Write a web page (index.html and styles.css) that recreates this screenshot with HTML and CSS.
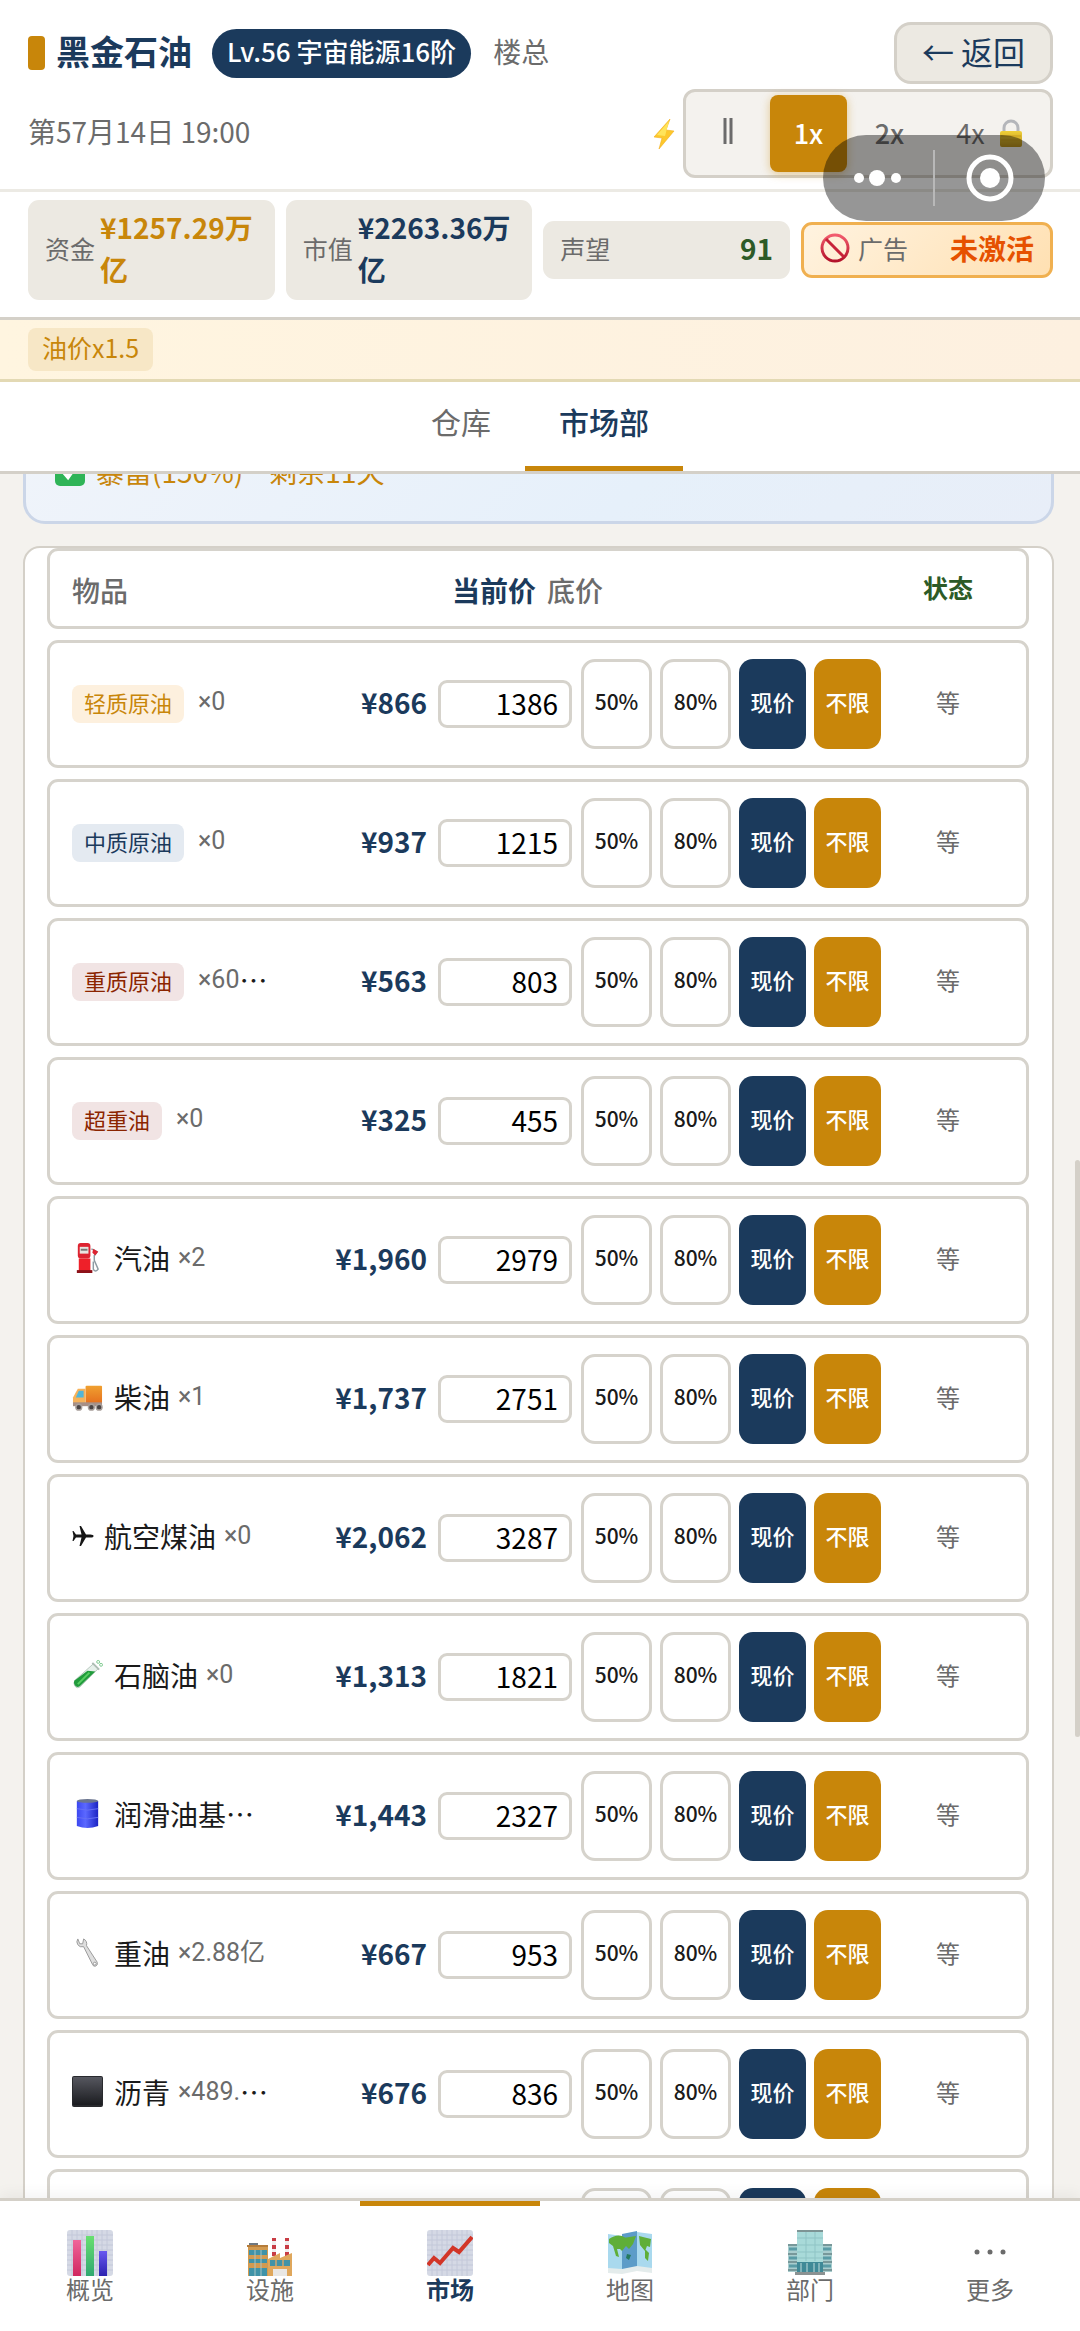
FILE: index.html
```html
<!DOCTYPE html>
<html lang="zh-CN">
<head>
<meta charset="utf-8">
<meta name="viewport" content="width=device-width, initial-scale=1">
<title>黑金石油</title>
<link rel="stylesheet" href="styles.css">
</head>
<body>
<svg class="defs" aria-hidden="true">
  <defs>
    <linearGradient id="gRed" x1="0" y1="0" x2="0" y2="1"><stop offset="0" stop-color="#f25c6e"/><stop offset="1" stop-color="#b3122a"/></linearGradient>
    <linearGradient id="gPink" x1="0" y1="0" x2="0" y2="1"><stop offset="0" stop-color="#f0649a"/><stop offset="1" stop-color="#d02860"/></linearGradient>
    <linearGradient id="gGreen" x1="0" y1="0" x2="0" y2="1"><stop offset="0" stop-color="#68e070"/><stop offset="1" stop-color="#30a870"/></linearGradient>
    <linearGradient id="gBlue" x1="0" y1="0" x2="0" y2="1"><stop offset="0" stop-color="#6858f0"/><stop offset="1" stop-color="#2c22b0"/></linearGradient>
    <linearGradient id="gDrum" x1="0" y1="0" x2="1" y2="0"><stop offset="0" stop-color="#3c48f0"/><stop offset=".4" stop-color="#5b68ff"/><stop offset="1" stop-color="#1c24c4"/></linearGradient>
    <linearGradient id="gBlack" x1="0" y1="0" x2="0" y2="1"><stop offset="0" stop-color="#56575f"/><stop offset="1" stop-color="#1b1c20"/></linearGradient>
    <linearGradient id="gGold" x1="0" y1="0" x2="0" y2="1"><stop offset="0" stop-color="#f0d038"/><stop offset="1" stop-color="#b8901c"/></linearGradient>
    <linearGradient id="gTruck" x1="0" y1="0" x2="0" y2="1"><stop offset="0" stop-color="#f0a030"/><stop offset="1" stop-color="#e46a1c"/></linearGradient>
  </defs>
  <symbol id="grid" viewBox="0 0 46 46"><rect width="46" height="46" rx="3" fill="#d5d9e5"/><path d="M5 0v46M10 0v46M15 0v46M20 0v46M25 0v46M30 0v46M35 0v46M40 0v46M0 5h46M0 10h46M0 15h46M0 20h46M0 25h46M0 30h46M0 35h46M0 40h46" stroke="#c3c8d9"/></symbol>
</svg>

<header class="top">
  <div class="top-row">
    <span class="brand-mark"></span>
    <h1 class="brand">黑金石油</h1>
    <span class="level">Lv.56 宇宙能源16阶</span>
    <span class="player">楼总</span>
    <button class="back" type="button">← 返回</button>
  </div>
  <div class="time-row">
    <time class="date">第57月14日 19:00</time>
    <svg class="bolt" viewBox="0 0 22 32"><path d="M17 1 1 19l8 1-3 11L21 13l-8-1z" fill="#fdc82c" stroke="#f2ae1e" stroke-width=".6"/><path d="M16 3 4 17l8 1z" fill="#ffe45a"/></svg>
    <div class="speeds">
      <button class="speed" type="button" aria-label="暂停"><svg width="10" height="26" viewBox="0 0 10 26"><path d="M2 0v26M8 0v26" stroke="#6b6b6b" stroke-width="3"/></svg></button>
      <button class="speed speed-on" type="button">1x</button>
      <button class="speed" type="button">2x</button>
      <button class="speed speed-locked" type="button">4x <svg width="24" height="28" viewBox="0 0 24 28"><path d="M5 14V9a7 7 0 0 1 14 0v5" fill="none" stroke="#b4b6ba" stroke-width="3"/><rect x="1" y="12" width="22" height="16" rx="2" fill="url(#gGold)"/><path d="M2 17h20M2 21h20" stroke="#c79c1d" stroke-width="1"/></svg></button>
    </div>
  </div>
</header>

<div class="capsule">
  <svg width="222" height="86" viewBox="0 0 222 86"><g fill="#fff"><circle cx="36" cy="43" r="5"/><circle cx="54" cy="43" r="8"/><circle cx="73" cy="43" r="5"/><circle cx="167" cy="43" r="10"/></g><circle cx="167" cy="43" r="21" fill="none" stroke="#fff" stroke-width="5"/><path d="M111 15v56" stroke="#b8b8b8" stroke-width="2"/></svg>
</div>

<section class="stats">
  <div class="stat"><span class="stat-label">资金</span><strong class="stat-value gold">¥1257.29万亿</strong></div>
  <div class="stat"><span class="stat-label">市值</span><strong class="stat-value navy">¥2263.36万亿</strong></div>
  <div class="stat"><span class="stat-label">声望</span><strong class="stat-value green">91</strong></div>
  <div class="stat stat-ad"><svg class="ban" viewBox="0 0 30 30"><circle cx="15" cy="15" r="13" fill="none" stroke="url(#gRed)" stroke-width="3"/><path d="m6 6 18 18" stroke="#c72339" stroke-width="3"/></svg><span class="stat-label">广告</span><strong class="stat-value orange">未激活</strong></div>
</section>

<div class="buffs"><span class="buff">油价x1.5</span></div>

<nav class="tabs">
  <button class="tab" type="button">仓库</button>
  <button class="tab tab-on" type="button">市场部</button>
</nav>

<main class="content">
  <section class="event">
    <svg class="check" viewBox="0 0 30 30"><rect width="30" height="30" rx="5" fill="#2fb457"/><path d="m7 14 6 7L23 7" fill="none" stroke="#fff" stroke-width="4"/></svg>
    <span>暴富(150%)</span><span class="event-left">剩余11天</span>
  </section>

  <table class="market">
    <thead>
      <tr class="row head"><th class="name">物品</th><th class="head-price">当前价</th><th class="head-floor">底价</th><th class="state head-state">状态</th></tr>
    </thead>
    <tbody>
      <tr class="row"><td class="name"><span class="tag tag-light">轻质原油</span><span class="qty">×0</span></td><td class="price">¥866</td><td class="actions"><input class="floor" aria-label="轻质原油底价" value="1386"><button class="pct" type="button">50%</button><button class="pct" type="button">80%</button><button class="now" type="button">现价</button><button class="any" type="button">不限</button></td><td class="state">等</td></tr>
      <tr class="row"><td class="name"><span class="tag tag-medium">中质原油</span><span class="qty">×0</span></td><td class="price">¥937</td><td class="actions"><input class="floor" aria-label="中质原油底价" value="1215"><button class="pct" type="button">50%</button><button class="pct" type="button">80%</button><button class="now" type="button">现价</button><button class="any" type="button">不限</button></td><td class="state">等</td></tr>
      <tr class="row"><td class="name"><span class="tag tag-heavy">重质原油</span><span class="qty">×60</span>…</td><td class="price">¥563</td><td class="actions"><input class="floor" aria-label="重质原油底价" value="803"><button class="pct" type="button">50%</button><button class="pct" type="button">80%</button><button class="now" type="button">现价</button><button class="any" type="button">不限</button></td><td class="state">等</td></tr>
      <tr class="row"><td class="name"><span class="tag tag-heavy">超重油</span><span class="qty">×0</span></td><td class="price">¥325</td><td class="actions"><input class="floor" aria-label="超重油底价" value="455"><button class="pct" type="button">50%</button><button class="pct" type="button">80%</button><button class="now" type="button">现价</button><button class="any" type="button">不限</button></td><td class="state">等</td></tr>
      <tr class="row"><td class="name"><svg class="emoji" viewBox="0 0 32 32"><rect x="6" y="1" width="13" height="16" rx="3" fill="#dd2330"/><rect x="7" y="17" width="12" height="13" fill="#ee2029"/><rect x="5" y="29" width="16" height="3" fill="#8d1219"/><rect x="8" y="5" width="9" height="7" fill="#e9e5e0"/><path d="M9 8h7" stroke="#777" stroke-width="2"/><path d="m20 7 6 3-3 4v5l4 9q-3 4-5 0v-8" fill="none" stroke="#8e9ba3" stroke-width="1.5"/><path d="m22 7 5 3-3 4-3-3z" fill="#dd2330"/></svg>汽油<span class="qty near">×2</span></td><td class="price">¥1,960</td><td class="actions"><input class="floor" aria-label="汽油底价" value="2979"><button class="pct" type="button">50%</button><button class="pct" type="button">80%</button><button class="now" type="button">现价</button><button class="any" type="button">不限</button></td><td class="state">等</td></tr>
      <tr class="row"><td class="name"><svg class="emoji" viewBox="0 0 32 32"><rect x="14" y="5" width="17" height="20" rx="1" fill="url(#gTruck)"/><path d="M1 24v-7l5-9h8v17H1z" fill="#f6b25a"/><path d="m4 17 3-7h5v7z" fill="#52b5d8"/><path d="M1 22h30v4H1z" fill="#a78f86"/><g fill="#4b4444" stroke="#a9a09c" stroke-width="1.5"><circle cx="7" cy="27" r="3"/><circle cx="20" cy="27" r="3"/><circle cx="28" cy="27" r="3"/></g></svg>柴油<span class="qty near">×1</span></td><td class="price">¥1,737</td><td class="actions"><input class="floor" aria-label="柴油底价" value="2751"><button class="pct" type="button">50%</button><button class="pct" type="button">80%</button><button class="now" type="button">现价</button><button class="any" type="button">不限</button></td><td class="state">等</td></tr>
      <tr class="row"><td class="name"><svg class="plane" viewBox="0 0 22 22"><path d="M21.500 11q0-1.500-3-1.500h-4.500L9 1H7.500L9.500 9.500H4L1.500 6H.5L1.500 11 .5 16h1L4 12.500h5.500L7.500 21H9l5-8.500h4.500q3 0 3-1.500z" fill="#161616"/></svg>航空煤油<span class="qty near">×0</span></td><td class="price">¥2,062</td><td class="actions"><input class="floor" aria-label="航空煤油底价" value="3287"><button class="pct" type="button">50%</button><button class="pct" type="button">80%</button><button class="now" type="button">现价</button><button class="any" type="button">不限</button></td><td class="state">等</td></tr>
      <tr class="row"><td class="name"><svg class="emoji" viewBox="0 0 32 32"><path d="m22 5 5 5L8 29q-3 2-5-1t0-6z" fill="#e6f0ea" stroke="#b8c8bf"/><path d="m16 12 8 1L8 28q-3 2-5-1t0-5z" fill="#219b3c"/><path d="M6 26 18 14" stroke="#57cf62" stroke-width="2"/><path d="m21 4 7 7" stroke="#aebcb4" stroke-width="2"/><g fill="none" stroke="#7cc98d"><circle cx="27" cy="3" r="1.500"/><circle cx="30" cy="6" r="1.500"/></g></svg>石脑油<span class="qty near">×0</span></td><td class="price">¥1,313</td><td class="actions"><input class="floor" aria-label="石脑油底价" value="1821"><button class="pct" type="button">50%</button><button class="pct" type="button">80%</button><button class="now" type="button">现价</button><button class="any" type="button">不限</button></td><td class="state">等</td></tr>
      <tr class="row"><td class="name"><svg class="emoji" viewBox="0 0 32 32"><path d="M5 3v26q11 4 22 0V3z" fill="url(#gDrum)"/><ellipse cx="16" cy="3" rx="11" ry="2" fill="#6c7690"/><path d="M5 11q11 3 22 0M5 20q11 3 22 0" fill="none" stroke="#6670f4"/></svg>润滑油基…</td><td class="price">¥1,443</td><td class="actions"><input class="floor" aria-label="润滑油基底价" value="2327"><button class="pct" type="button">50%</button><button class="pct" type="button">80%</button><button class="now" type="button">现价</button><button class="any" type="button">不限</button></td><td class="state">等</td></tr>
      <tr class="row"><td class="name"><svg class="emoji" viewBox="0 0 32 32"><path d="M6 2q-2 3 0 6t6 2l9 18q1 3 3.500 2t1.500-4L15 9q1-5-3-7l-1 5-3 0z" fill="#dedede" stroke="#9a9a9a"/><circle cx="23.500" cy="27.500" r="1.500" fill="#fff" stroke="#999"/></svg>重油<span class="qty near">×2.88亿</span></td><td class="price">¥667</td><td class="actions"><input class="floor" aria-label="重油底价" value="953"><button class="pct" type="button">50%</button><button class="pct" type="button">80%</button><button class="now" type="button">现价</button><button class="any" type="button">不限</button></td><td class="state">等</td></tr>
      <tr class="row"><td class="name"><svg class="emoji" viewBox="0 0 32 32"><rect width="32" height="32" rx="2" fill="#28292d"/><rect x="1" y="1" width="30" height="29" rx="1" fill="url(#gBlack)"/></svg>沥青<span class="qty near">×489.</span>…</td><td class="price">¥676</td><td class="actions"><input class="floor" aria-label="沥青底价" value="836"><button class="pct" type="button">50%</button><button class="pct" type="button">80%</button><button class="now" type="button">现价</button><button class="any" type="button">不限</button></td><td class="state">等</td></tr>
      <tr class="row"><td class="name"></td><td class="price"></td><td class="actions"><input class="floor" aria-label="底价"><button class="pct" type="button">50%</button><button class="pct" type="button">80%</button><button class="now" type="button">现价</button><button class="any" type="button">不限</button></td><td class="state">等</td></tr>
    </tbody>
  </table>
  <span class="thumb"></span>
</main>

<nav class="dock">
  <a class="dock-item" href="#overview"><svg class="dock-icon" viewBox="0 0 46 46"><use href="#grid"/><path d="M6 10h8v36H6z" fill="url(#gPink)"/><path d="M19 6h8v40h-8z" fill="url(#gGreen)"/><path d="M32 21h8v25h-8z" fill="url(#gBlue)"/></svg>概览</a>
  <a class="dock-item" href="#facility"><svg class="dock-icon" viewBox="0 0 46 46"><path d="M25 8h4v22h-4zM38 8h4v20h-4z" fill="#f1eded"/><path d="M25 8h4v3h-4zM25 15h4v4h-4zM25 22h4v4h-4zM38 8h4v3h-4zM38 15h4v4h-4zM38 22h4v4h-4z" fill="#c83c44"/><path d="M1 15h20v31H1z" fill="#d29a50"/><path d="M2 13h9v3H2z" fill="#6f7880"/><path d="M0 15h21v2H0z" fill="#b57c3a"/><path d="M2 20h18v5H2zM2 29h18v4H2zM2 38h18v8H2z" fill="#3f93a8"/><path d="M8 20v26M14 20v26" stroke="#a9c4c4"/><path d="M21 29l12-6v5l12-5v23H21z" fill="#dfa75c"/><path d="M23 30h20v6H23z" fill="#3f93a8"/><path d="M29 30v6M36 30v6" stroke="#d2a769" stroke-width="1.500"/><path d="M26 39h14v7H26z" fill="#e9e7e4"/></svg>设施</a>
  <a class="dock-item dock-on" href="#market" aria-current="page"><svg class="dock-icon" viewBox="0 0 46 46"><use href="#grid"/><path d="m1 35 6-7 6 5 13-15 6 4L45 7" fill="none" stroke="#d23528" stroke-width="4"/></svg>市场</a>
  <a class="dock-item" href="#map"><svg class="dock-icon" viewBox="0 0 46 46"><path d="M1 4 15 6 30 2l15 2v38l-15-2-15 3-14-1z" fill="#a9d9ee"/><path d="m15 4 15-3v39l-15 3z" fill="#5d9cc8"/><path d="M2 9q7-5 13-3l6 3-5 4-3 6-3 0 2 8-3-1-3-10-4-3zM16 8l13-2-3 8-4 5-3-3-4 5-4-4zM32 6l12 3-1 8-3-1-2 5-5-6zM38 19l4 4-1 8-3-3z" fill="#5fae38"/><path d="m20 24 4 1-2 5-3-2z" fill="#257a5d"/><path d="m1 38 14 1 15-3 15 2v5l-15-2-15 3-14-1z" fill="#e4ecec"/></svg>地图</a>
  <a class="dock-item" href="#department"><svg class="dock-icon" viewBox="0 0 46 46"><path d="M1 14h44v28H1z" fill="#a9cdce"/><path d="M1 15h44M1 24h44M1 32h44M1 40h44" stroke="#77989a" stroke-width="2"/><path d="M2 19h42M2 28h42M2 36h42" stroke="#5a9ca6" stroke-width="3"/><path d="M10 1h26v42H10z" fill="#a8dad9"/><path d="M10 1h26" stroke="#7d9494" stroke-width="2"/><path d="M10 8h26M10 15h26M10 22h26M10 28h26M19 2v29M28 2v29" stroke="#8fc4c5"/><path d="M10 32h26v10H10z" fill="#3f8997"/><path d="M14 33v9M20 33v9M27 33v9M32 33v9" stroke="#c1dddd"/><path d="M8 42h30v3H8z" fill="#8b9292"/></svg>部门</a>
  <a class="dock-item" href="#more"><svg class="dock-icon" viewBox="0 0 46 46"><g fill="#6b6b6b"><circle cx="10" cy="22" r="2.500"/><circle cx="23" cy="22" r="2.500"/><circle cx="36" cy="22" r="2.500"/></g></svg>更多</a>
</nav>
</body>
</html>
```
FILE: styles.css
```css
* { box-sizing: border-box; }

body {
  margin: 0;
  height: 100vh;
  display: flex;
  flex-direction: column;
  background: #f4f2ee;
  color: #1a1a1a;
  font: 28px/42px "Noto Sans CJK SC", sans-serif;
}

button, input { font: inherit; margin: 0; padding: 0; }
button { cursor: pointer; }
svg { flex: none; }
.defs { position: absolute; width: 0; height: 0; }

.gold { color: #c8860a; }
.navy { color: #1b3a5c; }
.green { color: #2d5a27; }
.orange { color: #e65100; }

/* Header */
.top {
  padding: 22px 27px 11px 28px;
  background: #fff;
  border-bottom: 3px solid #eceae4;
}
.top-row { display: flex; align-items: center; height: 62px; margin-bottom: 5px; }
.brand-mark { width: 17px; height: 34px; border-radius: 4px; background: #c8860a; }
.brand { margin: 0 20px 0 11px; padding-bottom: 4px; font-size: 34px; line-height: 50px; color: #1b3a5c; }
.level {
  padding: 2px 15px 8px;
  border-radius: 25px;
  background: #1b3a5c;
  color: #fff;
  font-size: 26px;
  font-weight: 500;
  line-height: 39px;
}
.player { margin-left: 22px; padding-bottom: 4px; color: #6b6b6b; }
.back {
  width: 159px;
  height: 62px;
  margin-left: auto;
  padding-bottom: 5px;
  border: 3px solid #d4d0c8;
  border-radius: 17px;
  background: #ece9e2;
  color: #1b3a5c;
  font-size: 32px;
}
.time-row { display: flex; align-items: center; }
.date { padding-bottom: 5px; color: #6b6b6b; }
.bolt { width: 22px; height: 32px; margin: 0 8px 0 auto; }
.speeds {
  display: flex;
  gap: 4px;
  padding: 3px;
  border: 3px solid #d4d0c8;
  border-radius: 12px;
  background: #f4f2ee;
}
.speed {
  width: 77px;
  height: 77px;
  padding-bottom: 2px;
  border: 0;
  border-radius: 8px;
  background: none;
  color: #6b6b6b;
  font-size: 27px;
  font-weight: 500;
}
.speed-on { background: #c8860a; color: #fff; box-shadow: 0 2px 10px rgba(200, 134, 10, .4); }
.speed-locked { display: flex; align-items: center; justify-content: center; gap: 14px; width: 115px; font-weight: 400; }

/* Floating host-app capsule */
.capsule {
  position: absolute;
  top: 135px;
  right: 35px;
  height: 86px;
  border-radius: 43px;
  background: rgba(0, 0, 0, .41);
}
.capsule svg { display: block; }

/* Stat cards */
.stats {
  display: flex;
  align-items: center;
  gap: 11px;
  padding: 8px 27px 17px 28px;
  background: #fff;
  border-bottom: 3px solid #d4d0c8;
}
.stat {
  flex: 1 1 0;
  display: flex;
  align-items: center;
  justify-content: space-between;
  gap: 5px;
  padding: 6px 17px 10px;
  border-radius: 11px;
  background: #ece9e2;
}
.stat-label { flex: none; color: #6b6b6b; font-size: 25px; }
.stat-value { flex: 0 1 auto; word-break: break-all; }
.stat-ad {
  flex: 0 0 252px;
  gap: 8px;
  padding: 2px 16px 6px;
  border: 3px solid #f0b050;
  background: linear-gradient(135deg, #fff3e0, #ffe0b2);
}
.ban { width: 30px; height: 30px; }
.stat-ad .stat-value { margin-left: auto; }

/* Active buffs */
.buffs {
  padding: 8px 28px;
  border-bottom: 3px solid #e3d9b4;
  background: linear-gradient(90deg, #fff5e0, #fdf0e0);
  display: flex;
}
.buff { padding: 0 14px 5px; border-radius: 8px; background: #f7e7c6; color: #c8860a; font-size: 25px; line-height: 38px; }

/* Tabs */
.tabs {
  display: flex;
  justify-content: center;
  background: #fff;
  border-bottom: 3px solid #d4d0c8;
}
.tab {
  height: 89px;
  padding: 0 34px 6px;
  border: 0;
  border-bottom: 5px solid transparent;
  background: none;
  color: #6b6b6b;
  font-size: 30px;
}
.tab-on { border-bottom-color: #c8860a; color: #1b3a5c; font-weight: 500; }

/* Scrolled content */
.content {
  position: relative;
  flex: 1;
  min-height: 0;
  overflow: hidden;
  padding: 0 26px 0 23px;
}
.event {
  display: flex;
  align-items: center;
  margin-top: -56px;
  margin-bottom: 22px;
  padding: 29px;
  border: 3px solid #cbd6e8;
  border-radius: 22px;
  background: linear-gradient(135deg, #f0f4fa, #e6f0fa 60%, #e8eef8);
  color: #c8860a;
}
.check { width: 30px; height: 30px; margin-right: 11px; }
.event-left { margin-left: 26px; }
.thumb {
  position: absolute;
  top: 686px;
  right: 0;
  width: 5px;
  height: 577px;
  border-radius: 3px;
  background: #d4d0c8;
}

/* Market table */
.market {
  display: block;
  padding: 0 23px 0 22px;
  border: 2px solid #d4d0c8;
  border-radius: 17px;
  background: #fff;
}
.market thead, .market tbody { display: flex; flex-direction: column; gap: 11px; }
.market thead { margin-bottom: 11px; }
.row {
  display: flex;
  align-items: center;
  gap: 11px;
  padding: 16px 22px;
  border: 3px solid #d6d3cc;
  border-radius: 11px;
  background: #fff;
}
.head { padding: 15px 22px 13px; }
.market th, .market td { padding: 0; }
.market th { font-weight: 500; color: #6b6b6b; text-align: left; }
.market td.name, .market td.price { padding-bottom: 5px; }
.name { flex: 1; display: flex; align-items: center; white-space: nowrap; }
.market .head-price { color: #1b3a5c; font-weight: 700; }
.head-floor { width: 334px; }
.market .state { width: 112px; padding-bottom: 5px; color: #6b6b6b; font-size: 24px; text-align: center; }
.market .head-state { color: #2d5a27; font-size: 25px; font-weight: 700; }
.tag { margin-top: 5px; padding: 0 12px 4px; border-radius: 8px; font-size: 22px; line-height: 34px; }
.tag-light { background: #fdf0de; color: #c8860a; }
.tag-medium { background: #e4eaf1; color: #1b3a5c; }
.tag-heavy { background: #f1e4e4; color: #8b2500; }
.qty { margin-left: 14px; color: #6b6b6b; font-family: Roboto, "Noto Sans CJK SC", sans-serif; font-size: 25px; }
.near { margin-left: 8px; }
.emoji { width: 31px; height: 31px; margin-right: 11px; }
.plane { width: 22px; height: 22px; margin-right: 10px; }
.price { color: #1b3a5c; font-weight: 700; }
.actions { display: flex; align-items: center; gap: 8px; }
.floor {
  width: 134px;
  height: 48px;
  margin-right: 1px;
  padding: 0 11px 3px;
  border: 3px solid #d6d3cc;
  border-radius: 9px;
  background: #fff;
  color: #000;
  text-align: right;
}
.pct, .now, .any {
  width: 67px;
  height: 90px;
  padding-bottom: 6px;
  border: 0;
  border-radius: 14px;
  color: #fff;
  font-size: 22px;
  font-weight: 500;
}
.pct { width: 71px; border: 3px solid #d6d3cc; background: #fff; color: #1a1a1a; font-size: 21px; }
.now { background: #1b3a5c; }
.any { background: #c8860a; }

/* Bottom navigation */
.dock {
  position: relative;
  display: grid;
  grid-template-columns: repeat(6, 1fr);
  border-top: 3px solid #d4d0c8;
  background: #fff;
  box-shadow: 0 -4px 14px rgba(0, 0, 0, .05);
}
.dock-item {
  display: flex;
  flex-direction: column;
  align-items: center;
  padding: 24px 0 29px;
  border-top: 5px solid transparent;
  color: #6b6b6b;
  font-size: 24px;
  line-height: 26px;
  text-decoration: none;
}
.dock-on { border-top-color: #c8860a; color: #1b3a5c; font-weight: 700; }
.dock-icon { width: 46px; height: 46px; }
```
